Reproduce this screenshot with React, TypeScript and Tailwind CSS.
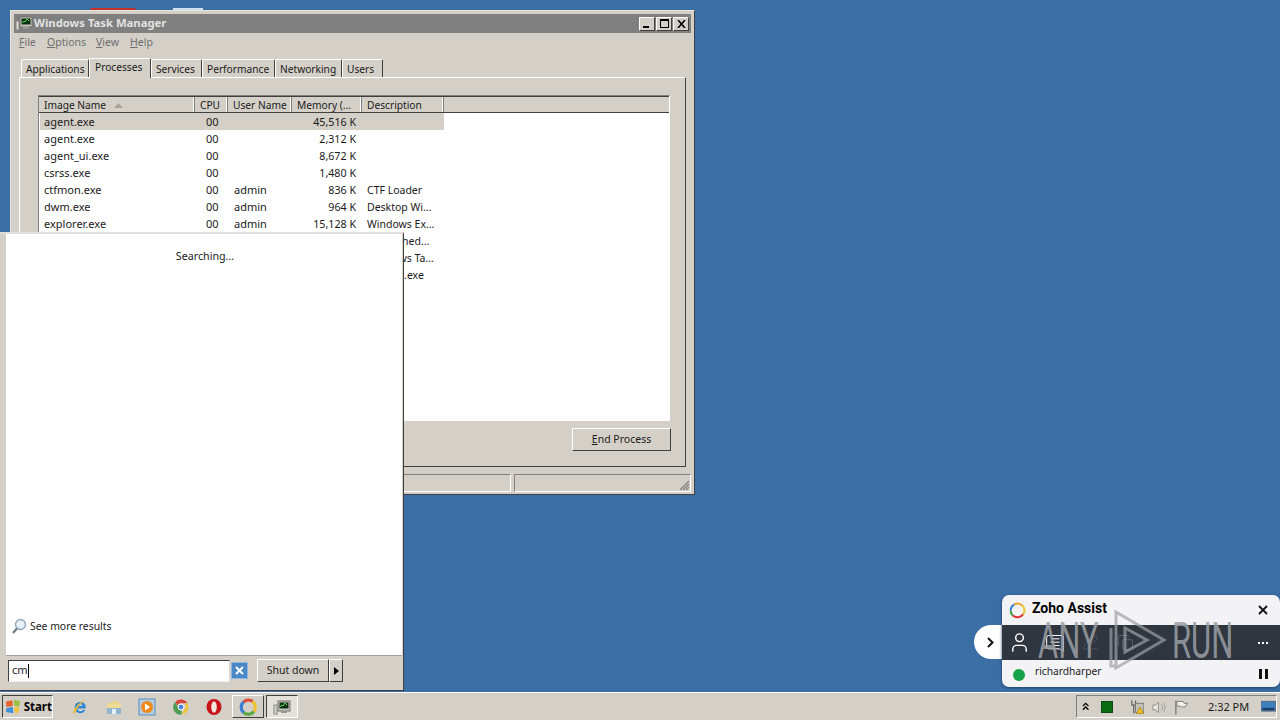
import React from 'react';
import { User, MessageSquareText, PenLine, Copy } from 'lucide-react';

const raised = 'border border-t-white border-l-white border-r-[#404040] border-b-[#404040]';

const tabs = [
  { name: 'Applications', w: 'w-[68px]' },
  { name: 'Processes', w: 'w-[62px]', active: true },
  { name: 'Services', w: 'w-[51px]' },
  { name: 'Performance', w: 'w-[73px]' },
  { name: 'Networking', w: 'w-[67px]' },
  { name: 'Users', w: 'w-[41px]' },
];

const rows = [
  ['agent.exe', '00', '', '45,516 K', ''],
  ['agent.exe', '00', '', '2,312 K', ''],
  ['agent_ui.exe', '00', '', '8,672 K', ''],
  ['csrss.exe', '00', '', '1,480 K', ''],
  ['ctfmon.exe', '00', 'admin', '836 K', 'CTF Loader'],
  ['dwm.exe', '00', 'admin', '964 K', 'Desktop Wi...'],
  ['explorer.exe', '00', 'admin', '15,128 K', 'Windows Ex...'],
  ['jusched.exe', '00', 'admin', '1,204 K', 'Task Sched...'],
  ['taskhost.exe', '00', 'admin', '2,048 K', 'Windows Ta...'],
  ['taskmgr.exe', '00', 'admin', '3,320 K', 'svchost.exe'],
];

const StartOrb = () => (
  <svg width="17" height="17" viewBox="0 0 17 17">
    <path d="M1 3.5l6.5-1.5.5 6-6.5 1z" fill="#e8622c" />
    <path d="M9 1.5l6.5 1.5-1 5.5-5-.5z" fill="#9cc23f" />
    <path d="M1.5 10l6.5-1 .5 6.5-7.5-1.5z" fill="#3f8fd8" />
    <path d="M9.5 9l5 .5-1 5.5-3.5.5z" fill="#f2c230" />
  </svg>
);

const IeIcon = () => (
  <svg width="18" height="18" viewBox="0 0 18 18">
    <path d="M14.5 10.5H6.5a3 3 0 005.4 1.6h2.4A5.6 5.6 0 013.7 9.5a5.6 5.6 0 0110.8-2c.3.9.3 2 0 3zM6.6 8h5a2.6 2.6 0 00-5 0z" fill="#2b86d6" />
    <path d="M2 16C1.500 11 9 2.500 16 2c-3 .5-10 6-11 12" fill="#e8b93a" />
  </svg>
);

const FolderIcon = () => (
  <svg width="18" height="18" viewBox="0 0 18 18">
    <path d="M2 5h5l1-2h6v3H2z" fill="#e9d48a" />
    <rect x="2" y="6" width="14" height="10" fill="#f0dc98" />
    <rect x="2" y="10" width="14" height="6" fill="#8fb6d0" />
    <rect x="7" y="11" width="4" height="5" fill="#e4eef4" />
  </svg>
);

const MediaIcon = () => (
  <svg width="18" height="18" viewBox="0 0 18 18">
    <rect x="1" y="1" width="16" height="16" fill="#b5cbe0" stroke="#5a8fc0" />
    <circle cx="9" cy="9" r="6" fill="#f08a1c" />
    <path d="M7 5.500l5 3.500-5 3.500z" fill="#fff" />
  </svg>
);

const ChromeIcon = () => (
  <svg width="18" height="18" viewBox="0 0 18 18">
    <path d="M9 1.500a7.500 7.500 0 016.500 3.750H9a3.750 3.750 0 00-3.400 2.200L3.200 3.900A7.500 7.500 0 019 1.500z" fill="#d8433a" />
    <path d="M15.500 5.250A7.500 7.500 0 019.500 16.500l3-5.500a3.750 3.750 0 00-.2-5.750z" fill="#eec63c" />
    <path d="M9.500 16.500A7.500 7.500 0 013.200 3.900l3 5.600a3.750 3.750 0 003.600 3.200z" fill="#4a9d50" />
    <circle cx="9" cy="9" r="3" fill="#4d86d8" stroke="#fff" />
  </svg>
);

const OperaIcon = () => (
  <svg width="18" height="18" viewBox="0 0 18 18">
    <ellipse cx="9" cy="9" rx="7.500" ry="8" fill="#c81418" />
    <ellipse cx="9" cy="9" rx="2.800" ry="5.800" fill="#f4e4e0" />
  </svg>
);

const ZohoRing = () => (
  <svg width="17" height="17" viewBox="0 0 20 20">
    <g fill="none" strokeWidth="2.400">
      <path d="M6 3A8 8 0 0116 4.500" stroke="#eca52c" />
      <path d="M16 4.500A8 8 0 0116.500 14.500" stroke="#e8c92e" />
      <path d="M16.500 14.500A8 8 0 014.500 16" stroke="#d9352f" />
      <path d="M4.500 16A8 8 0 012 10" stroke="#3f9d4a" />
      <path d="M2 10A8 8 0 016 3" stroke="#3b7fd4" />
    </g>
  </svg>
);

const ZohoTaskIcon = () => (
  <svg width="18" height="18" viewBox="0 0 20 20">
    <g fill="none" strokeWidth="3.600">
      <path d="M5 4.500A8 8 0 0115 3.800" stroke="#dc4a34" />
      <path d="M15 3.800A8 8 0 0116.500 15" stroke="#eec22e" />
      <path d="M16.500 15A8 8 0 015 16.200" stroke="#5aa845" />
      <path d="M5 16.200A8 8 0 015 4.500" stroke="#3b7fd4" />
    </g>
  </svg>
);

const MonitorIcon = () => (
  <svg width="18" height="18" viewBox="0 0 18 18">
    <rect x="5" y="3" width="12" height="10" fill="#c8c8c0" stroke="#70706a" />
    <rect x="6.500" y="4.500" width="9" height="6" fill="#0f2f14" />
    <path d="M7 9l2-2 1 1 2-3 2 2" fill="none" stroke="#4fdc4f" />
    <rect x="1" y="7" width="3" height="9" fill="#d8d8d0" stroke="#8a8a84" />
    <rect x="8" y="13" width="6" height="2" fill="#9a9a92" />
  </svg>
);

const Magnifier = () => (
  <svg width="16" height="17" viewBox="0 0 16 17">
    <circle cx="9.500" cy="6.500" r="5" fill="#e6f0f6" stroke="#8ea6b6" strokeWidth="1.300" />
    <path d="M6 10.500L2 15" stroke="#6f7a80" strokeWidth="2.200" />
  </svg>
);

const CaptionButtons = () => (
  <div className="flex gap-[1px] mr-[2px]">
    <div className={`${raised} w-[16px] h-[14px] bg-[#d4d0c8] flex items-end pl-[3px] pb-[2px]`}>
      <div className="w-[6px] h-[2px] bg-black" />
    </div>
    <div className={`${raised} w-[16px] h-[14px] bg-[#d4d0c8] flex items-center justify-center`}>
      <div className="w-[9px] h-[9px] border border-black border-t-2" />
    </div>
    <div className={`${raised} w-[16px] h-[14px] bg-[#d4d0c8] flex items-center justify-center`}>
      <svg width="9" height="8" viewBox="0 0 9 8">
        <path d="M1 0l7 8M8 0L1 8" stroke="#000" strokeWidth="1.600" />
      </svg>
    </div>
  </div>
);

const Header = ({ w, children }: { w: string; children: React.ReactNode }) => (
  <div className={`${w} h-full shrink-0 flex items-center pl-[5px] pt-[2px] border-r border-r-[#808080] shadow-[inset_-1px_0_0_#fff]`}>
    {children}
  </div>
);

const TaskManager = () => (
  <div className="absolute left-[10px] top-[10px] w-[685px] h-[485px] bg-[#d4d0c8] border border-t-[#e8e6e0] border-l-[#e8e6e0] border-r-[#404040] border-b-[#404040] p-[3px] flex flex-col">
    <div className="h-[19px] bg-[#808080] flex items-center justify-between shrink-0">
      <div className="flex items-center gap-[1px] pl-[1px] pb-[1px] text-[#e2e2e2] font-bold text-[11.3px]">
        <MonitorIcon />
        <span>Windows Task Manager</span>
      </div>
      <CaptionButtons />
    </div>

    <div className="h-[20px] flex items-center text-[#6f6f6f] text-[10.5px] shrink-0 pl-[5px] pb-[1px]">
      <span className="w-[28px]"><u>F</u>ile</span>
      <span className="w-[49px]"><u>O</u>ptions</span>
      <span className="w-[34px]"><u>V</u>iew</span>
      <span><u>H</u>elp</span>
    </div>

    <div className="flex items-end h-[24px] pl-[7px] shrink-0 text-[10.2px]">
      {tabs.map((t) => (
        <div
          key={t.name}
          className={`${t.w} flex items-center justify-start rounded-t-[2px] border-l border-t border-r border-l-white border-t-white border-r-[#404040] ${
            t.active ? 'h-[20px] -mb-[1px] pb-[1px] pl-[5px] bg-[#d4d0c8] relative z-10' : 'h-[18px] pt-[2px] pl-[4px]'
          }`}
        >
          {t.name}
        </div>
      ))}
    </div>

    <div className="mx-[5px] h-[390px] shrink-0 border border-t-white border-l-white border-r-[#404040] border-b-[#404040] pt-[17px] pl-[18px] pr-[15px] flex flex-col">
      <div className="h-[326px] border border-t-[#808080] border-l-[#808080] border-r-white border-b-white flex flex-col bg-white shrink-0">
        <div className="h-[17px] flex bg-[#d4d0c8] border-t border-t-[#404040] border-b border-b-[#404040] shrink-0 text-[10.2px]">
          <Header w="w-[156px]">
            <span>Image Name</span>
            <svg width="9" height="5" viewBox="0 0 9 5" className="ml-[8px]">
              <path d="M4.500 0L9 5H0z" fill="#a8a49c" />
            </svg>
          </Header>
          <Header w="w-[33px]">CPU</Header>
          <Header w="w-[64px]">User Name</Header>
          <Header w="w-[70px]">Memory (...</Header>
          <Header w="w-[82px]">Description</Header>
        </div>
        <div className="flex flex-col pl-[1px]">
          {rows.map((r, i) => (
            <div key={i} className={`h-[17px] w-[404px] flex items-center pt-[2px] ${i === 0 ? 'bg-[#d4d0c8]' : ''}`}>
              <div className="w-[156px] pl-[4px]">{r[0]}</div>
              <div className="w-[33px] pl-[10px]">{r[1]}</div>
              <div className="w-[64px] pl-[5px]">{r[2]}</div>
              <div className="w-[63px] text-right text-[10.7px]">{r[3]}</div>
              <div className="pl-[11px] whitespace-nowrap text-[10.5px]">{r[4]}</div>
            </div>
          ))}
        </div>
      </div>
      <div className="flex justify-end mt-[7px] -mr-[1px]">
        <button className={`${raised} w-[99px] h-[23px] bg-[#d4d0c8] text-[10.5px]`}>
          <u>E</u>nd Process
        </button>
      </div>
    </div>

    <div className="mt-[7px] h-[18px] flex gap-[3px] shrink-0">
      <div className="w-[497px] border border-t-[#808080] border-l-[#808080] border-r-white border-b-white" />
      <div className="flex-1 border border-t-[#808080] border-l-[#808080] border-r-white border-b-white flex items-end justify-end">
        <svg width="12" height="12" viewBox="0 0 12 12">
          <path d="M11 2l-9 9M11 5l-6 6M11 8l-3 3" stroke="#808080" strokeWidth="1.200" />
        </svg>
      </div>
    </div>
  </div>
);

const StartMenu = () => (
  <div className="absolute left-0 top-[232px] w-[404px] h-[459px] bg-[#d4d0c8] border-t-2 border-t-[#e0ded8] border-r border-r-[#404040] border-b border-b-[#404040] pl-[6px] pr-[1px] flex flex-col">
    <div className="h-[422px] bg-white border-b border-b-[#a0a0a0] flex flex-col shrink-0">
      <div className="text-center mt-[14px] pl-[2px] text-[10.7px]">Searching...</div>
      <div className="mt-auto mb-[20px] ml-[5px] flex items-center gap-[3px] text-[10.4px]">
        <Magnifier />
        <span>See more results</span>
      </div>
    </div>
    <div className="flex-1 flex items-center ml-[2px] pb-[5px]">
      <div className="w-[222px] h-[22px] bg-white border border-t-[#404040] border-l-[#404040] border-r-[#d8d8d8] border-b-[#f0f0f0] flex items-center pl-[3px]">
        <span>cm</span>
        <div className="w-[1px] h-[14px] bg-black" />
      </div>
      <div className="w-[17px] h-[17px] ml-[1px] bg-[#4a88c8] border border-[#8fb8e0] flex items-center justify-center">
        <svg width="9" height="9" viewBox="0 0 9 9">
          <path d="M1 1l7 7M8 1L1 8" stroke="#fff" strokeWidth="2" />
        </svg>
      </div>
      <div className="flex ml-[9px]">
        <button className={`${raised} w-[72px] h-[23px] bg-[#d4d0c8] text-[10.5px]`}>Shut down</button>
        <div className={`${raised} w-[14px] h-[23px] bg-[#d4d0c8] flex items-center justify-center`}>
          <svg width="5" height="8" viewBox="0 0 5 8">
            <path d="M0 0l5 4-5 4z" fill="#000" />
          </svg>
        </div>
      </div>
    </div>
  </div>
);

const ZohoWidget = () => (
  <div className="absolute left-[974px] top-[595px] w-[306px] h-[92px] flex">
    <div className="w-[28px] h-[34px] mt-[30px] bg-white rounded-l-[17px] flex items-center justify-end pr-[8px] shrink-0">
      <svg width="7" height="11" viewBox="0 0 7 11">
        <path d="M1 1l4.500 4.500L1 10" fill="none" stroke="#111" strokeWidth="2" />
      </svg>
    </div>
    <div className="w-[278px] h-full rounded-[7px] bg-[#f3f3f5] shadow-[0_1px_3px_#1d3f66] flex flex-col overflow-hidden">
      <div className="h-[30px] flex items-center pl-[7px] pr-[12px] shrink-0">
        <ZohoRing />
        <span className="ml-[6px] -mt-[3px] font-['Roboto',sans-serif] font-bold text-[14px] text-black">Zoho Assist</span>
        <svg width="10" height="10" viewBox="0 0 10 10" className="ml-auto">
          <path d="M1 1l8 8M9 1L1 9" stroke="#111" strokeWidth="1.800" />
        </svg>
      </div>
      <div className="h-[35px] bg-[#2f3640] flex items-center pl-[6px] pr-[12px] text-white shrink-0">
        <User size={23} strokeWidth={1.500} />
        <MessageSquareText size={20} strokeWidth={1.200} className="ml-[14px] -scale-x-100" />
        <PenLine size={17} strokeWidth={1} className="ml-[17px] text-[#5a616a]" />
        <Copy size={17} strokeWidth={1} className="ml-[18px] text-[#6a7078]" />
        <span className="ml-auto flex gap-[2px]">
          <i className="w-[2px] h-[2px] bg-white" />
          <i className="w-[2px] h-[2px] bg-white" />
          <i className="w-[2px] h-[2px] bg-white" />
        </span>
      </div>
      <div className="flex-1 flex items-center pl-[11px] pr-[12px]">
        <div className="w-[12px] h-[12px] mt-[2px] rounded-full bg-[#17a34a]" />
        <span className="ml-[10px] -mt-[3px] text-[10.2px] text-[#222]">richardharper</span>
        <div className="ml-auto flex gap-[3px]">
          <div className="w-[3px] h-[10px] bg-[#111]" />
          <div className="w-[3px] h-[10px] bg-[#111]" />
        </div>
      </div>
    </div>
  </div>
);

// watermark sits on top of the widget
const Watermark = () => (
  <div className="absolute left-[1038px] top-[608px] w-[196px] h-[66px] pointer-events-none">
    <span className="absolute left-0 top-[4px] w-[64px] origin-left scale-x-[0.62] font-['Roboto',sans-serif] font-normal text-[50px] leading-[58px] text-[#9ca0a5]/85 whitespace-nowrap">ANY</span>
    <span className="absolute left-[134px] top-[4px] w-[64px] origin-left scale-x-[0.62] font-['Roboto',sans-serif] font-normal text-[50px] leading-[58px] text-[#9ca0a5]/85 whitespace-nowrap">RUN</span>
    <svg width="70" height="66" viewBox="0 0 70 66" className="absolute left-[64px] top-0 text-[#9ca0a5]/70">
      <path d="M9 20v38h5M14 4v56l48-28z" fill="none" stroke="currentColor" strokeWidth="3" />
      <path d="M23 20v24l22-12z" fill="none" stroke="currentColor" strokeWidth="3" />
    </svg>
  </div>
);

const Taskbar = () => (
  <div className="absolute left-0 top-[692px] w-[1280px] h-[28px] bg-[#d4d0c8] border-t border-t-white flex items-center pl-[2px]">
    <div className="w-[51px] h-[23px] border border-t-[#404040] border-l-[#404040] border-r-white border-b-white flex items-center pl-[2px] gap-[2px] font-bold text-[11.5px] text-black">
      <StartOrb />
      <span>Start</span>
    </div>
    <div className="ml-[18px] w-[18px]"><IeIcon /></div>
    <div className="ml-[16px] w-[18px]"><FolderIcon /></div>
    <div className="ml-[15px] w-[18px]"><MediaIcon /></div>
    <div className="ml-[16px] w-[18px]"><ChromeIcon /></div>
    <div className="ml-[15px] w-[18px]"><OperaIcon /></div>
    <div className={`${raised} ml-[9px] w-[32px] h-[23px] flex items-center justify-center`}>
      <ZohoTaskIcon />
    </div>
    <div className="ml-[2px] w-[32px] h-[23px] border border-t-[#404040] border-l-[#404040] border-r-white border-b-white bg-[#e4e1da] flex items-center justify-center">
      <MonitorIcon />
    </div>
    <div className="ml-auto mr-[3px] w-[201px] h-[23px] border border-t-[#808080] border-l-[#808080] border-r-white border-b-white flex items-center pl-[5px]">
      <svg width="8" height="9" viewBox="0 0 8 9">
        <path d="M1 4l3-3 3 3M1 8l3-3 3 3" fill="none" stroke="#000" strokeWidth="1.300" />
      </svg>
      <div className="ml-[12px] w-[12px] h-[12px] bg-[#0b6b12] border border-[#0a4a10]" />
      <svg width="16" height="16" viewBox="0 0 16 16" className="ml-[17px]">
        <path d="M2 1v5h4V1M4 6v9" fill="none" stroke="#666" strokeWidth="1.400" />
        <rect x="6" y="4" width="9" height="10" fill="#c4c0b8" stroke="#777" />
        <path d="M11 8l4 7H7z" fill="#f2c21e" stroke="#8a6d00" strokeWidth=".6" />
      </svg>
      <svg width="16" height="16" viewBox="0 0 16 16" className="ml-[7px]">
        <path d="M2 6h3l3-3v11l-3-3H2z" fill="#eceae4" stroke="#8a8a84" />
        <path d="M11 5a5 5 0 010 7M13 3a8 8 0 010 11" fill="none" stroke="#9a9a94" />
      </svg>
      <svg width="16" height="16" viewBox="0 0 16 16" className="ml-[8px]">
        <path d="M2 1v15" stroke="#777" strokeWidth="1.400" />
        <path d="M3 2h7l1 2h4l-3 4H8L7 7H3z" fill="#f2f0ea" stroke="#777" />
      </svg>
      <span className="ml-[19px] w-[43px] pt-[2px] whitespace-nowrap text-[11px]">2:32 PM</span>
      <svg width="16" height="14" viewBox="0 0 18 14" className="ml-[12px]">
        <rect x="0" y="0" width="18" height="12" fill="#3f7fbf" stroke="#56606a" />
        <rect x="2" y="8" width="14" height="3" fill="#1d3f66" />
      </svg>
    </div>
  </div>
);

export default function App() {
  return (
    <div className="relative w-[1280px] h-[720px] overflow-hidden bg-[#3a6ea5] font-['Noto_Sans',sans-serif] text-[11px] text-[#1a1a1a]">
      {/* desktop icons poking out above the window */}
      <div className="absolute left-[90px] top-[8px] w-[46px] h-[2px] bg-[#c8302a] rounded-t-full" />
      <div className="absolute left-[173px] top-[8px] w-[30px] h-[2px] bg-[#cfe0ee]" />
      <TaskManager />
      <StartMenu />
      <ZohoWidget />
      <Watermark />
      <Taskbar />
    </div>
  );
}
